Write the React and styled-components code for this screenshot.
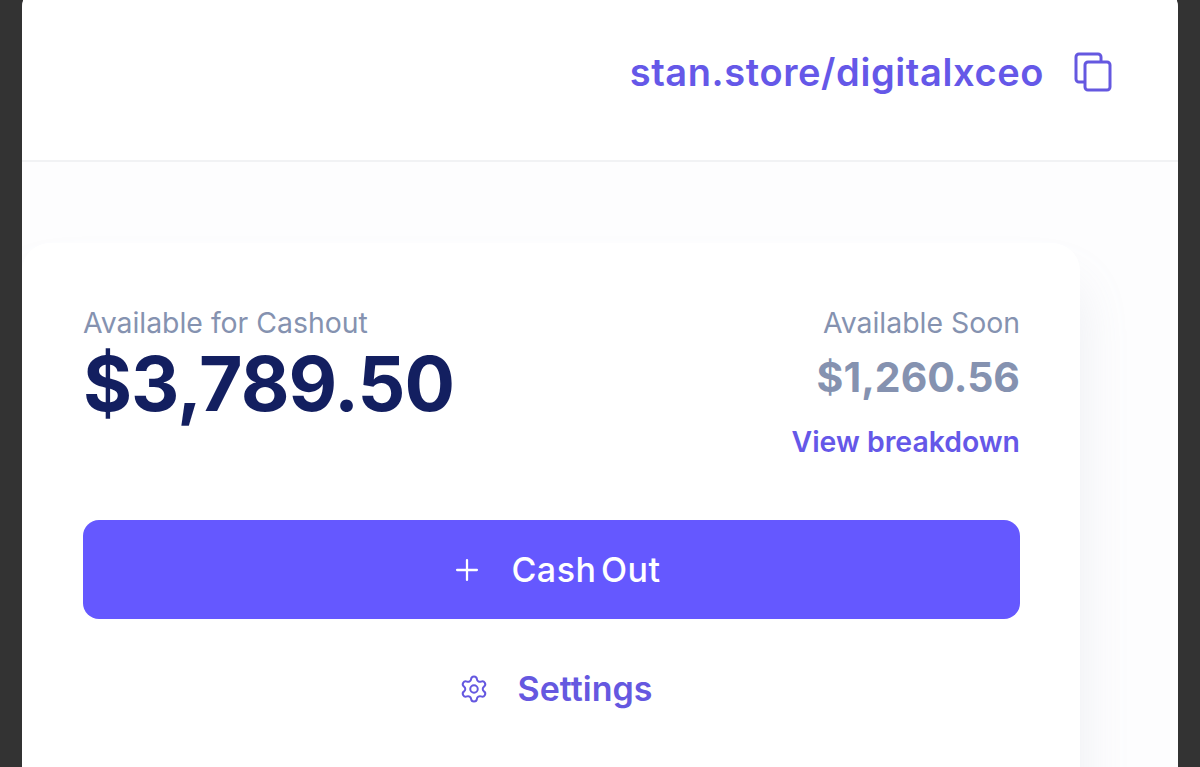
import styled, { createGlobalStyle } from "styled-components";
import { Plus, Settings } from "lucide-react";

const GlobalStyle = createGlobalStyle`
  html, body {
    margin: 0;
    height: 100%;
    overflow: hidden;
    background: #333333;
    font-family: "Inter", "Liberation Sans", sans-serif;
  }
`;

const Page = styled.div`
  height: 767px;
  padding: 0 22px;
  box-sizing: border-box;
  overflow: hidden;
`;

const Panel = styled.div`
  margin-top: -18px;
  height: 840px;
  background: #fdfdfe;
  border-radius: 26px;
  overflow: hidden;
`;

const Header = styled.header`
  height: 180px;
  box-sizing: border-box;
  padding: 18px 66px 16px 0;
  background: #ffffff;
  border-bottom: 2px solid #f1f2f4;
  display: flex;
  align-items: center;
  justify-content: flex-end;
  gap: 30px;
`;

const StoreLink = styled.a`
  color: #6558e8;
  font-size: 38px;
  font-weight: 600;
  letter-spacing: 0.6px;
`;

const CopyIcon = styled.svg`
  width: 38px;
  height: 40px;
  display: block;
  fill: none;
  stroke: #6558e0;
  stroke-width: 3;
`;

const Body = styled.div`
  padding: 81px 98px 0 0;
`;

const Card = styled.section`
  background: #ffffff;
  border-radius: 28px 28px 0 0;
  padding: 62px 60px 0 61px;
  height: 560px;
  box-shadow: 0 40px 50px rgba(150, 160, 180, 0.16);
`;

const BalanceRow = styled.div`
  display: flex;
  justify-content: space-between;
  align-items: flex-start;
  height: 215px;
`;

const Column = styled.div`
  display: flex;
  flex-direction: column;
  align-items: ${(p) => (p.$end ? "flex-end" : "flex-start")};
`;

const Label = styled.div`
  color: #8592b0;
  font-size: 28.4px;
  line-height: 36px;
`;

const Amount = styled.div`
  color: #131f60;
  font-size: 75px;
  font-weight: 700;
  line-height: 80px;
  letter-spacing: -1px;
  margin-top: 3px;
`;

const SoonAmount = styled.div`
  color: #8592b0;
  font-size: 41px;
  font-weight: 700;
  line-height: 58px;
  margin-top: 7px;
`;

const Breakdown = styled.a`
  color: #6558e8;
  font-size: 28.4px;
  font-weight: 600;
  line-height: 36px;
  margin-top: 18px;
`;

const CashOutButton = styled.button`
  width: 100%;
  height: 99px;
  border: 0;
  border-radius: 16px;
  padding: 0 0 0 8px;
  background: #6558ff;
  color: #ffffff;
  font-family: inherit;
  font-size: 34px;
  font-weight: 500;
  letter-spacing: 0.5px;
  word-spacing: -5px;
  display: flex;
  align-items: center;
  justify-content: center;
  gap: 27px;
`;

const SettingsLink = styled.a`
  margin-top: 48px;
  padding-left: 8px;
  color: #6558e0;
  font-size: 34px;
  font-weight: 600;
  line-height: 44px;
  display: flex;
  align-items: center;
  justify-content: center;
  gap: 29px;
`;

export default function App() {
  return (
    <>
      <GlobalStyle />
      <Page>
        <Panel>
          <Header>
            <StoreLink>stan.store/digitalxceo</StoreLink>
            <CopyIcon viewBox="0 0 38 40">
              <path d="M10 30H5a3 3 0 0 1-3-3V5a3 3 0 0 1 3-3h19a3 3 0 0 1 3 3v5" strokeLinejoin="round" />
              <rect x="11" y="10" width="25" height="28" rx="3" />
            </CopyIcon>
          </Header>
          <Body>
            <Card>
              <BalanceRow>
                <Column>
                  <Label>Available for Cashout</Label>
                  <Amount>$3,789.50</Amount>
                </Column>
                <Column $end>
                  <Label>Available Soon</Label>
                  <SoonAmount>$1,260.56</SoonAmount>
                  <Breakdown>View breakdown</Breakdown>
                </Column>
              </BalanceRow>
              <CashOutButton>
                <Plus size={34} strokeWidth={1.6} />
                Cash Out
              </CashOutButton>
              <SettingsLink>
                <Settings size={30} strokeWidth={1.6} />
                Settings
              </SettingsLink>
            </Card>
          </Body>
        </Panel>
      </Page>
    </>
  );
}
